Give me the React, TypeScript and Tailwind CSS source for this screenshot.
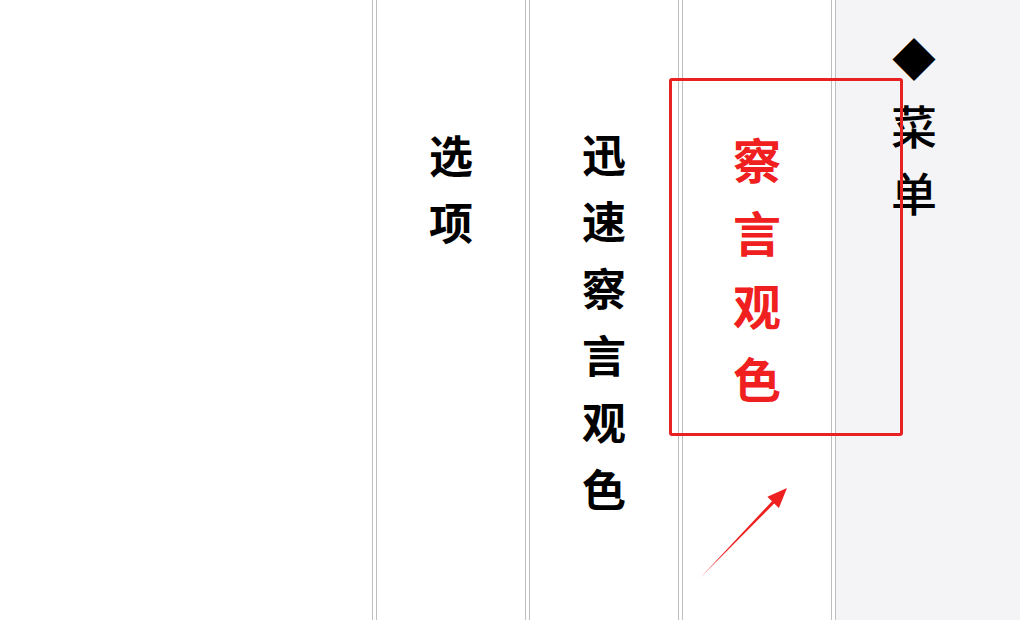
const cjk = { fontFamily: '"Noto Sans CJK SC", "Noto Sans", sans-serif' };

function Divider() {
  return <div className="w-[5px] shrink-0 border-x border-[#bfbfbf] bg-white" />;
}

function VerticalLabel({ text, className }: { text: string; className: string }) {
  return (
    <div className={`flex flex-col items-center ${className}`}>
      {text.split("").map((ch, i) => (
        <span key={i}>{ch}</span>
      ))}
    </div>
  );
}

export default function App() {
  return (
    <div className="relative flex h-[620px] w-[1020px] overflow-hidden bg-white" style={cjk}>
      {/* empty area left of the tabs */}
      <div className="w-[372px] shrink-0" />

      <Divider />
      <div className="w-[148px] shrink-0 pt-[121px]">
        <VerticalLabel text="选项" className="text-[44px] font-bold leading-[67px] text-black" />
      </div>

      <Divider />
      <div className="w-[148px] shrink-0 pt-[120px]">
        <VerticalLabel text="迅速察言观色" className="text-[44px] font-bold leading-[67px] text-black" />
      </div>

      <Divider />
      <div className="w-[148px] shrink-0 pt-[122px]">
        <VerticalLabel text="察言观色" className="text-[48px] font-bold leading-[73px] text-[#f02020]" />
      </div>

      <Divider />
      <div className="flex-1 bg-[#f4f4f6] pl-[54px] pt-[24px]">
        <div className="flex w-[48px] flex-col items-center text-[46px] font-medium leading-[67px] text-black">
          <span className="text-[44px]">◆</span>
          <span>菜</span>
          <span>单</span>
        </div>
      </div>

      {/* annotation overlay */}
      <div className="absolute left-[669px] top-[78px] h-[358px] w-[234px] rounded-[3px] border-[3px] border-[#e82222]" />
      <svg className="absolute left-[690px] top-[480px]" width="110" height="110" viewBox="0 0 110 110">
        <polygon points="10,98 84.2,23.5 88.9,28 97,8 77.4,16.8 82,21.3" fill="#ee2020" />
      </svg>
    </div>
  );
}
